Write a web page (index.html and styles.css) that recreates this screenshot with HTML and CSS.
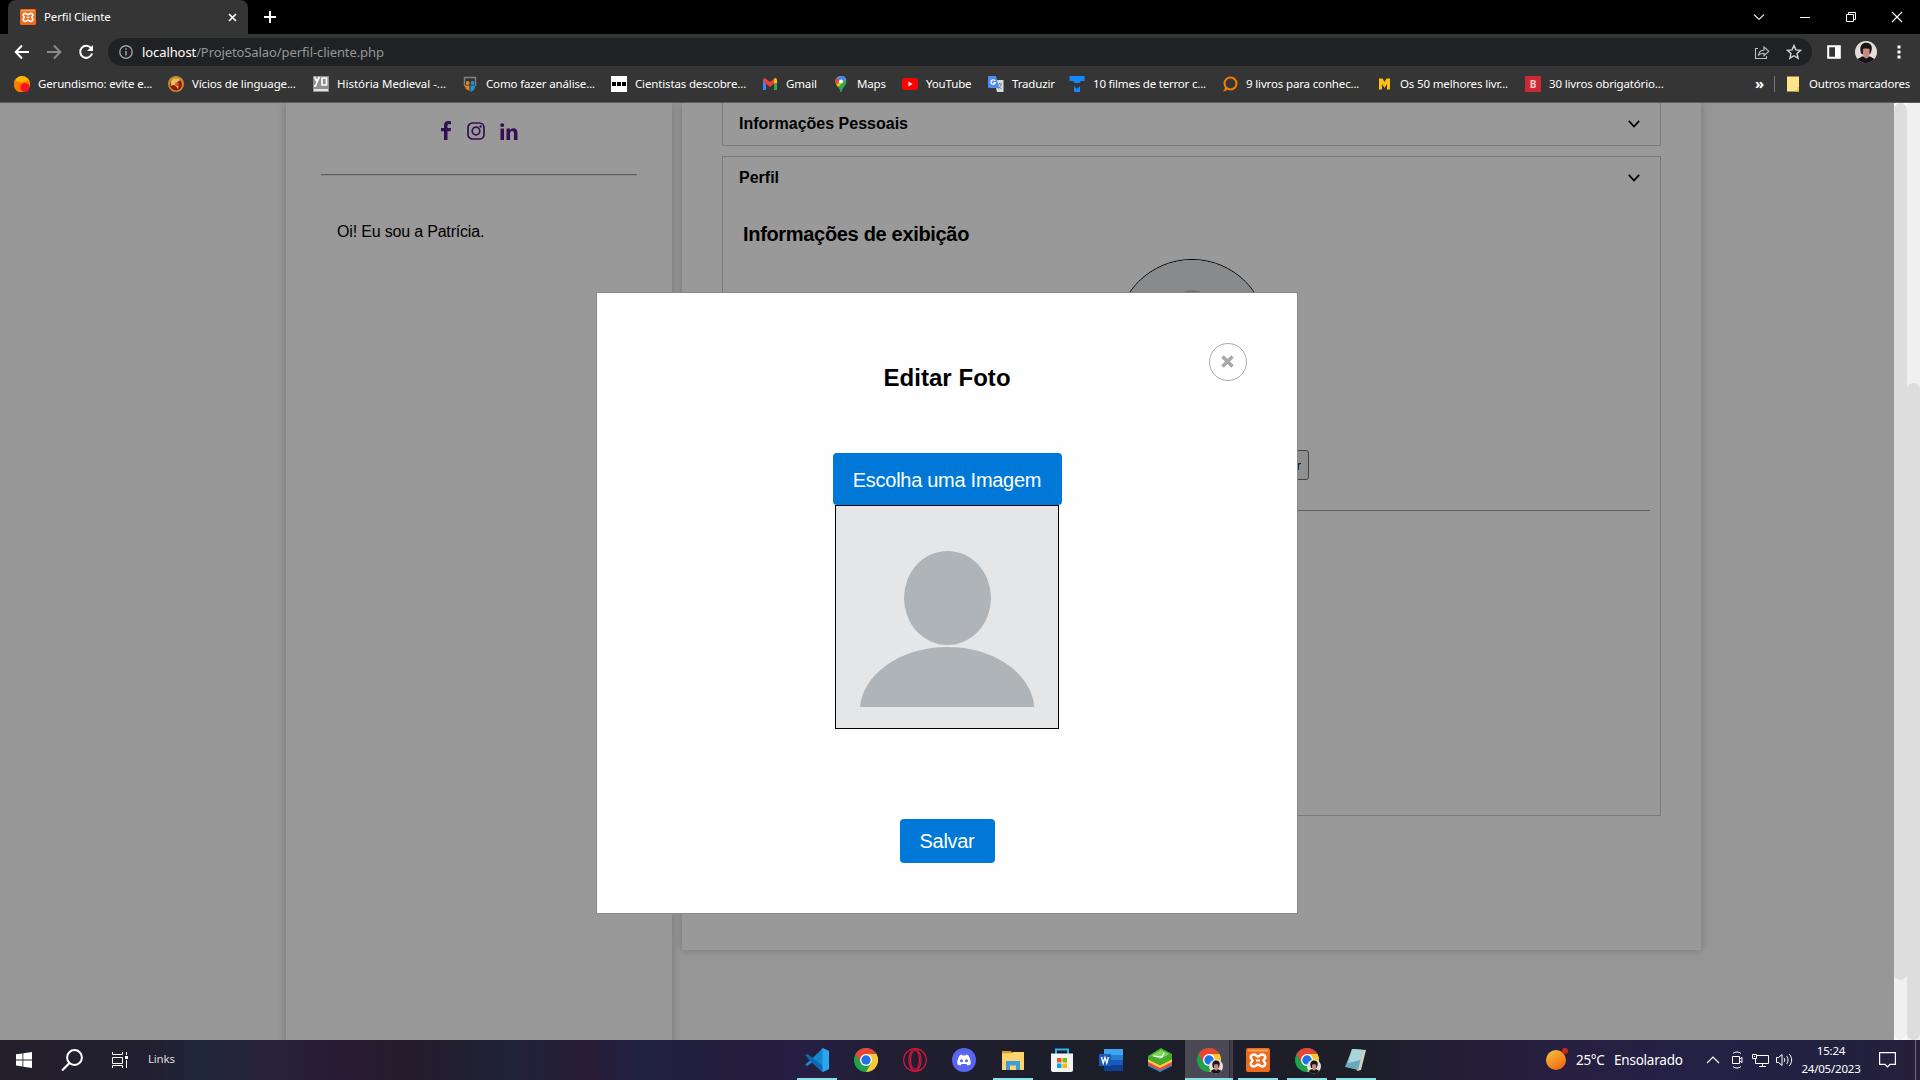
FILE: index.html
```html
<!DOCTYPE html>
<html lang="pt-BR">
<head>
<meta charset="utf-8">
<title>Perfil Cliente</title>
<link rel="stylesheet" href="styles.css">
</head>
<body>
<svg class="defs" aria-hidden="true">
  <symbol id="xampp" viewBox="0 0 24 24">
    <rect width="24" height="24" rx="2" fill="#ec6b1c"/><path d="M2 1.500h20v2H2z" fill="#f6a25c"/>
    <path d="M8 6.500c2.200 0 2.400 2 4 2s1.800-2 4-2 3.300 1.600 3.300 3-1.800 1.900-1.800 3 1.800 1.600 1.800 3-1.100 3-3.300 3-2.400-2-4-2-1.800 2-4 2-3.300-1.600-3.300-3 1.800-1.900 1.800-3-1.800-1.600-1.800-3 1.100-3 3.300-3z" fill="none" stroke="#fff" stroke-width="2.500"/>
    <path d="M10 12.500h4" stroke="#fff" stroke-width="2"/>
  </symbol>
  <symbol id="chrome" viewBox="0 0 24 24">
    <circle cx="12" cy="12" r="12" fill="#1ea34b"/>
    <path d="M12 0a12 12 0 0 1 10.400 6H12L6.800 15 1.600 6A12 12 0 0 1 12 0z" fill="#ea4435"/>
    <path d="M22.400 6A12 12 0 0 1 12 24l5.200-9L12 6z" fill="#fcc934"/>
    <circle cx="12" cy="12" r="6" fill="#fff"/><circle cx="12" cy="12" r="4.700" fill="#1a73e8"/>
  </symbol>
  <symbol id="face" viewBox="0 0 22 22">
    <circle cx="11" cy="11" r="11" fill="#e4ddd8"/>
    <path d="M2.500 18 7 15.500h8l4.500 2.500A11 11 0 0 1 2.500 18z" fill="#17151a"/>
    <path d="M5.500 9.500c-1-5.500 2.500-8 6-7.800 4.500.3 6.300 3.800 5 7.800-.5 3-1.500 3.700-2.500 3.700H7.500c-1.500 0-2-2-2-3.700z" fill="#1c1417"/>
    <path d="M8 7.500h6.500v5c0 2-1.500 5-3.200 5S8 14.500 8 12.500z" fill="#c88b83"/>
    <path d="M7.500 8c2-1.500 5-1.500 7.500 0l-.5-3h-7z" fill="#1c1417"/>
  </symbol>
  <symbol id="chrome-profile" viewBox="0 0 26 26">
    <use href="#chrome" width="24" height="24"/><use href="#face" x="12" y="11" width="14" height="15"/>
  </symbol>
  <symbol id="person" viewBox="0 0 222 222">
    <rect width="222" height="222" fill="#e4e6e8"/>
    <ellipse cx="111.500" cy="92" rx="43.500" ry="47" fill="#aeb4b8"/>
    <path d="M24 201C26.500 170 62 141 111.500 141S196 170 198.300 201z" fill="#aeb4b8"/>
  </symbol>
</svg>

<header class="browser">
  <div class="tabstrip">
    <div class="tab">
      <svg class="i16" viewBox="0 0 24 24"><use href="#xampp"/></svg>
      <span class="tab-title">Perfil Cliente</span>
      <svg class="tab-close" viewBox="0 0 9 9"><path d="M1 1l7 7M8 1 1 8" stroke="#fff" stroke-width="1.700"/></svg>
    </div>
    <svg class="new-tab" viewBox="0 0 12 12"><path d="M6 0v12M0 6h12" stroke="#fff" stroke-width="2"/></svg>
    <div class="window-buttons">
      <svg viewBox="0 0 12 12"><path d="M1 3.500l5 5 5-5" fill="none" stroke="#ddd" stroke-width="1.200"/></svg>
      <svg viewBox="0 0 12 12"><path d="M1 6.500h10" stroke="#fff"/></svg>
      <svg viewBox="0 0 12 12"><path d="M1.500 3.500h7v7h-7zM3.500 3.500v-2h7v7h-2" fill="none" stroke="#fff"/></svg>
      <svg viewBox="0 0 12 12"><path d="M1 1l10 10M11 1 1 11" stroke="#fff" stroke-width="1.200"/></svg>
    </div>
  </div>
  <div class="toolbar">
    <div class="nav">
      <svg viewBox="0 0 16 16"><path d="M15 8H2M8 1.500 1.700 8 8 14.500" fill="none" stroke="#fff" stroke-width="2"/></svg>
      <svg viewBox="0 0 16 16"><path d="M1 8h13M8 1.500 14.300 8 8 14.500" fill="none" stroke="#8a8a8a" stroke-width="2"/></svg>
      <svg viewBox="0 0 16 16"><path d="M13 4.200A6 6 0 1 0 14 9.500" fill="none" stroke="#fff" stroke-width="2"/><path d="M15 1v6H9z" fill="#fff"/></svg>
    </div>
    <div class="omnibox">
      <svg class="info" viewBox="0 0 14 14"><circle cx="7" cy="7" r="6.200" fill="none" stroke="#9aa0a6" stroke-width="1.400"/><path d="M7 6v4.500M7 3.300v1.500" stroke="#9aa0a6" stroke-width="1.500"/></svg>
      <span class="url">localhost<span class="path">/ProjetoSalao/perfil-cliente.php</span></span>
      <svg class="omni-icon" viewBox="0 0 16 16"><path d="M4 4.500H1.500v10h11V12M4.500 11c.5-3 2-4.700 5.500-5V3L14.800 7.300 10 11.700V9.200C7.500 9.200 6 9.700 4.500 11z" fill="none" stroke="#bdc1c6" stroke-width="1.100"/></svg>
      <svg class="omni-icon" viewBox="0 0 16 16"><path d="M8 1.500l1.900 4.400 4.700.4-3.600 3.200 1.100 4.700L8 11.700l-4.100 2.500L5 9.500 1.400 6.300l4.700-.4z" fill="none" stroke="#d0d3d6" stroke-width="1.400"/></svg>
    </div>
    <svg class="panel" viewBox="0 0 14 14"><path d="M1.200 1.200h11.600v11.600H1.200z" fill="none" stroke="#fff" stroke-width="2"/><path d="M8 1h5v12H8z" fill="#fff"/></svg>
    <svg class="profile" viewBox="0 0 22 22"><use href="#face"/></svg>
    <svg class="kebab" viewBox="0 0 4 14"><path d="M.5.500h3v3h-3zM.5 5.500h3v3h-3zM.5 10.500h3v3h-3z" fill="#fff"/></svg>
  </div>
  <nav class="bookmarks">
    <a><svg viewBox="0 0 16 16"><circle cx="8" cy="8" r="8" fill="#ffb800"/><path d="M1 4a8 8 0 0 0 9 12 8 8 0 0 0 4-12c-3 3-9 3-13 0z" fill="#ff7a00"/><circle cx="11" cy="11.500" r="4.500" fill="#ff1028"/></svg><span>Gerundismo: evite e...</span></a>
    <a><svg viewBox="0 0 16 16"><circle cx="8" cy="8" r="8" fill="#c98a2c"/><circle cx="8" cy="8.500" r="6" fill="#8c1c10"/><path d="M3 5c3-4 8-3 10 0-2-1-3 0-4 2 1 1 2 3 1 6C8 9 5 8 3 10z" fill="#edc062"/><circle cx="9" cy="8" r="2" fill="#d35325"/></svg><span>Vícios de linguage...</span></a>
    <a class="wide"><svg viewBox="0 0 16 16"><path d="M0 0h16v16H0z" fill="#8f8f8f"/><path d="M1.500 1l2.500 4.500L6.500 1M6 1 2.500 10H1M9 2h4.500v7H9zM1 14h14" fill="none" stroke="#fff" stroke-width="1.700"/></svg><span>História Medieval -...</span></a>
    <a><svg viewBox="0 0 16 16"><path d="M2.500 10V1.500h11V10" fill="none" stroke="#7b8486" stroke-width="1.400"/><circle cx="5.700" cy="7" r="1.900" fill="#e98215"/><circle cx="10.500" cy="7" r="1.900" fill="#1696d2"/><path d="M2.500 9.500h5V15L4 13z" fill="#e98215"/><path d="M13.500 9.500h-5V16l3.500-2z" fill="#1696d2"/></svg><span>Como fazer análise...</span></a>
    <a><svg viewBox="0 0 16 16"><path d="M0 0h16v16H0z" fill="#fff"/><path d="M1 6h4v4H1zM6 6h4v4H6zM11 6h4v4h-4z" fill="#000"/></svg><span>Cientistas descobre...</span></a>
    <a><svg viewBox="0 0 16 16"><path d="M1 3v11h3V6z" fill="#4285f4"/><path d="M15 3v11h-3V6z" fill="#34a853"/><path d="M1 3l2-1 5 4 5-4 2 1-1 3-6 5-6-5z" fill="#ea4335"/><path d="M12 3l2-1 1 2v3h-3z" fill="#fbbc04"/></svg><span>Gmail</span></a>
    <a><svg viewBox="0 0 16 16"><path d="M8 0a5.500 5.500 0 0 1 5.500 5.500C13.500 9 9.500 11 8.500 16h-1C6.500 11 2.500 9 2.500 5.500A5.500 5.500 0 0 1 8 0z" fill="#34a853"/><path d="M8 0a5.500 5.500 0 0 1 5 3L5 11C3.500 9 2.500 7 2.500 5.500A5.500 5.500 0 0 1 8 0z" fill="#fbbc04"/><path d="M8 0a5.500 5.500 0 0 1 5 3L8 8 3.500 2.500A5.500 5.500 0 0 1 8 0z" fill="#4285f4"/><path d="M3.700 2 7 5 4 8.500C2 6 2.300 4 3.700 2z" fill="#ea4335"/><circle cx="8" cy="5.500" r="2" fill="#fff"/></svg><span>Maps</span></a>
    <a><svg viewBox="0 0 16 16"><rect y="2" width="16" height="12" rx="3" fill="#f00"/><path d="M6.500 5.500v5l4-2.500z" fill="#fff"/></svg><span>YouTube</span></a>
    <a><svg viewBox="0 0 16 16"><path d="M6 4h9.500v12H9z" fill="#d6dade"/><path d="M9 8h5M11.500 7v1M13 8c0 2-1 4-3 5M10.500 9.500c.5 2 2 3 3 3.500" stroke="#7c8a92" fill="none"/><path d="M0 0h8l3 12H1a1 1 0 0 1-1-1z" fill="#4d8bf5"/><path d="M7.300 5A2.300 2.300 0 1 0 7.500 6.700H5.200" stroke="#fff" fill="none" stroke-width="1.200"/></svg><span>Traduzir</span></a>
    <a class="tight"><svg viewBox="0 0 16 16"><path d="M.5 0h15v5H12L10 7H6L4 5H.5zM5 10l3 3 3-3v6H5z" fill="#1688ff"/></svg><span>10 filmes de terror c...</span></a>
    <a><svg viewBox="0 0 16 16"><circle cx="8.500" cy="7.500" r="6" fill="none" stroke="#f57c00" stroke-width="2"/><path d="M1 15.500c2 0 4-1 5-3l-3-2c0 2-.5 3.500-2 5z" fill="#f57c00"/></svg><span>9 livros para conhec...</span></a>
    <a><svg viewBox="0 0 16 16"><path d="M3 2.500h3.500L8.500 6l2-3.500H14v11h-3V8l-2.500 4L6 8v5.500H3z" fill="#ffc010"/></svg><span>Os 50 melhores livr...</span></a>
    <a><b class="b-icon">B</b><span>30 livros obrigatório...</span></a>
    <b class="more">»</b>
    <a class="others"><svg viewBox="0 0 14 16"><path d="M1 .5h12v15H1z" fill="#ffe48b"/><path d="M13 11v4.500H9V14h2.500v-3z" fill="#f3c843"/></svg><span>Outros marcadores</span></a>
  </nav>
</header>

<main class="viewport">
  <aside class="sidebar">
    <div class="social">
      <svg width="12" height="19" viewBox="0 0 12 19"><path d="M11 .3v3H8.700c-1 0-1.200.5-1.200 1.400v2.200H11l-.4 3.300H7.500V19H4v-8.800H1V6.900h3V4.400C4 1.500 5.600.1 8.200.1z" fill="#551a8b"/></svg>
      <svg width="18" height="18" viewBox="0 0 18 18"><rect x="1" y="1" width="16" height="16" rx="4.500" fill="none" stroke="#551a8b" stroke-width="1.700"/><circle cx="9" cy="9" r="3.800" fill="none" stroke="#551a8b" stroke-width="1.700"/><circle cx="13.600" cy="4.500" r="1.200" fill="#551a8b"/></svg>
      <svg width="18" height="17" viewBox="0 0 18 17"><path d="M.5 5.500H4V17H.5zM2.200.2a2 1.800 0 1 1 0 3.700 2 1.800 0 0 1 0-3.700zM6.500 5.500H10v1.600c.7-1.100 1.800-1.900 3.500-1.900 2.700 0 4 1.800 4 4.800v7H14v-6.400c0-1.500-.5-2.500-1.900-2.500S10 9.200 10 10.500V17H6.500z" fill="#551a8b"/></svg>
    </div>
    <hr>
    <p>Oi! Eu sou a Patrícia.</p>
  </aside>
  <section class="content">
    <div class="panel-box first"><h3>Informações Pessoais</h3><svg class="chev" viewBox="0 0 12 8"><path d="M.8.800 6 6.500 11.200.8" fill="none" stroke="#000" stroke-width="1.800"/></svg></div>
    <div class="panel-box second">
      <div class="panel-head"><h3>Perfil</h3><svg class="chev" viewBox="0 0 12 8"><path d="M.8.800 6 6.500 11.200.8" fill="none" stroke="#000" stroke-width="1.800"/></svg></div>
      <h2>Informações de exibição</h2>
      <svg class="round" viewBox="0 0 222 222"><use href="#person"/></svg>
      <button class="edit" type="button">Editar</button>
      <hr>
    </div>
  </section>
  <div class="overlay">
    <div class="modal">
      <div class="close"><svg viewBox="0 0 13 13"><path d="M1.500 1.500l10 10M11.500 1.500l-10 10" stroke="#aaa" stroke-width="3.600"/></svg></div>
      <h1>Editar Foto</h1>
      <div class="choose">Escolha uma Imagem</div>
      <svg class="photo" viewBox="0 0 222 222"><use href="#person"/></svg>
      <div class="save">Salvar</div>
    </div>
  </div>
  <div class="scroll inner"><i></i></div>
  <div class="scroll outer"><i></i></div>
</main>

<footer class="taskbar">
  <div class="start">
    <svg width="16" height="16" viewBox="0 0 16 16"><path d="M0 2.300 6.500 1.400v6.100H0zM7.300 1.300 16 0v7.500H7.300zM0 8.400h6.500v6.100L0 13.600zM7.300 8.400H16V16l-8.700-1.300z" fill="#fff"/></svg>
    <svg width="22" height="22" viewBox="0 0 22 22"><circle cx="13.500" cy="8.500" r="7.400" fill="none" stroke="#fff" stroke-width="2"/><path d="M8.500 14 1 21.500" stroke="#fff" stroke-width="2.200"/></svg>
    <svg width="17" height="16" viewBox="0 0 17 16"><path d="M.5 0v2.500h10V0M.5 5.500h10v6H.500zM.5 16v-2.500h10V16M14.500 0v3M14.500 8v8" fill="none" stroke="#fff"/><path d="M13 4h3v3h-3z" fill="#fff"/></svg>
    <span>Links</span>
  </div>
  <div class="apps">
    <div class="app on"><svg viewBox="0 0 24 24"><path d="M17.500 0 24 3v18l-6.500 3L7 14.500 2.500 18 0 16.700 14 4z" fill="#1687cf"/><path d="M0 7.300 2.500 6 18 18v6L7 14.500z" fill="#0b6bb0"/><path d="M17.500 0 24 3v18l-6.500 3z" fill="#2ba6ee"/></svg></div>
    <div class="app"><svg viewBox="0 0 24 24"><use href="#chrome"/></svg></div>
    <div class="app"><svg viewBox="0 0 24 24"><g fill="none" stroke="#d9153e" stroke-width="1.200"><circle cx="12" cy="12" r="11.300"/><ellipse cx="12" cy="12" rx="6" ry="11"/><ellipse cx="12" cy="12" rx="4.500" ry="9.500"/></g></svg></div>
    <div class="app"><svg viewBox="0 0 24 24"><circle cx="12" cy="12" r="12" fill="#5865f2"/><path d="M8 7l2-.5.5 1h3l.5-1 2 .5c2 2.500 3 5.500 2.700 9-1 1-2.200 1.300-3.200 1.500l-1-1.500h-5l-1 1.500c-1-.2-2.200-.5-3.200-1.500C5 12.500 6 9.500 8 7z" fill="#fff"/><circle cx="9.500" cy="12.700" r="1.500" fill="#5865f2"/><circle cx="14.500" cy="12.700" r="1.500" fill="#5865f2"/></svg></div>
    <div class="app on"><svg viewBox="0 0 24 24"><path d="M1 3h9l2 3h-11z" fill="#dc9c1f"/><path d="M1 5.500 11 5l1-1h11v18H1z" fill="#fbd56b"/><path d="M5 13h14v9h-4v-4.500H9V22H5z" fill="#3d9be0"/></svg></div>
    <div class="app"><svg viewBox="0 0 24 24"><path d="M6 8V1.500h12V8" fill="none" stroke="#2fb5ea" stroke-width="2"/><path d="M1 5.500h22V22a2 2 0 0 1-2 2H3a2 2 0 0 1-2-2z" fill="#f2f2f2"/><path d="M7 10h4.500v4.500H7z" fill="#f25022"/><path d="M12.500 10H17v4.500h-4.500z" fill="#7fba00"/><path d="M7 15.500h4.500V20H7z" fill="#00a4ef"/><path d="M12.500 15.500H17V20h-4.500z" fill="#ffb900"/></svg></div>
    <div class="app"><svg viewBox="0 0 24 24"><path d="M5 1h19v6H5z" fill="#41a5ee"/><path d="M5 7h19v5H5z" fill="#2b7cd3"/><path d="M5 12h19v5H5z" fill="#185abd"/><path d="M5 17h19v6H5z" fill="#103f91"/><path d="M0 6h12v12H0z" fill="#185abd"/><path d="M2.500 9l1.700 6L6 9.500 7.800 15l1.700-6" fill="none" stroke="#fff" stroke-width="1.400"/></svg></div>
    <div class="app"><svg viewBox="0 0 24 24"><path d="M0 16l12 6 12-6v2l-12 6-12-6z" fill="#2490df"/><path d="M0 13.500l12 6 12-6v3l-12 6-12-6z" fill="#f0443c"/><path d="M0 11l12 6 12-6v3l-12 6-12-6z" fill="#ffca3a"/><path d="M0 8 13 0l11 6v5l-12 6L0 11z" fill="#43ad2f"/><path d="M3 7.500 13 2l8 4-9 5z" fill="#83d65d"/><path d="M5 8l9 1 2-4" fill="none" stroke="#fff" stroke-width="1.200"/></svg></div>
    <div class="app on active"><svg class="prof" viewBox="0 0 26 26"><use href="#chrome-profile"/></svg></div>
    <div class="app on"><svg viewBox="0 0 24 24"><use href="#xampp"/></svg></div>
    <div class="app on"><svg class="prof" viewBox="0 0 26 26"><use href="#chrome-profile"/></svg></div>
    <div class="app on"><svg viewBox="0 0 24 24"><path d="M8 1l14 1-5 20-4 1z" fill="#d5d0bd"/><path d="M8 1l11 1-5 20-13-3z" fill="#6aa9bb"/><path d="M8 1l11 1-2.500 10L4 15z" fill="#a8d4dc"/></svg></div>
  </div>
  <div class="tray">
    <svg class="sun" viewBox="0 0 22 22"><defs><linearGradient id="g" x1="0" y1="0" x2=".7" y2="1"><stop stop-color="#f6c340"/><stop offset="1" stop-color="#f26a10"/></linearGradient></defs><circle cx="10" cy="12" r="10" fill="url(#g)"/><circle cx="19" cy="3" r="3" fill="#c5281c"/></svg>
    <span class="temp">25°C</span><span class="cond">Ensolarado</span>
    <svg class="caret" viewBox="0 0 14 8"><path d="M1 7l6-6 6 6" fill="none" stroke="#fff" stroke-width="1.200"/></svg>
    <svg class="cam" viewBox="0 0 12 18"><path d="M1.500 5.500h7v7h-7zM8.500 8l2.500-1.500v5L8.500 10M2 2.500c2-2 6-2 8 0M2 15.500c2 2 6 2 8 0" fill="none" stroke="#fff"/></svg>
    <svg class="net" viewBox="0 0 17 15"><path d="M5 2.500h11.500v8H3.500V6M7 13.500h7M10.500 10.500v3M.5 1.500h4v4h-4zM2 3.500h1" fill="none" stroke="#fff"/></svg>
    <svg class="vol" viewBox="0 0 17 14"><path d="M.5 4.500h2l3.500-3v11l-3.500-3h-2zM8 5c1 1 1 3 0 4M10.500 3c2 2 2 6 0 8M13 1c3.500 3.500 3.500 8.500 0 12" fill="none" stroke="#fff"/></svg>
    <div class="clock"><span>15:24</span><span>24/05/2023</span></div>
    <svg class="note" viewBox="0 0 17 16"><path d="M.6.600h15.800v11.800h-5.400l-2.500 2.600L6 12.400H.6z" fill="none" stroke="#fff" stroke-width="1.200"/></svg>
    <i class="desktop"></i>
  </div>
</footer>
</body>
</html>
```
FILE: styles.css
```css
* { box-sizing: border-box; }
body { margin: 0; width: 1920px; height: 1080px; overflow: hidden; font-family: "Liberation Sans", Arial, sans-serif; color: #000; display: flex; flex-direction: column; }
svg { display: block; flex: none; }
h1, h2, h3, p, hr { margin: 0; }
.defs { position: absolute; width: 0; height: 0; }

.browser { height: 103px; background: #353535; border-bottom: 1px solid #5c5a5a; font-family: "Noto Sans", sans-serif; color: #fff; white-space: nowrap; }
.tabstrip { height: 34px; background: #000; display: flex; align-items: center; }
.tab { width: 240px; height: 34px; margin-left: 8px; padding: 0 12px; background: #353535; border-radius: 8px 8px 0 0; display: flex; align-items: center; gap: 8px; }
.i16 { width: 16px; height: 16px; }
.tab-title { font-size: 11.500px; letter-spacing: -.14px; line-height: 16px; flex: 1; padding-bottom: 1px; }
.tab-close { width: 9px; height: 9px; margin-right: -1px; }
.new-tab { width: 12px; height: 12px; margin-left: 16px; }
.window-buttons { margin-left: auto; display: flex; gap: 34px; padding-right: 17px; height: 28px; align-items: center; }
.window-buttons svg { width: 12px; height: 12px; }

.toolbar { height: 36px; display: flex; align-items: center; }
.nav { display: flex; gap: 16px; padding-left: 14px; width: 108px; }
.nav svg { width: 16px; height: 16px; }
.omnibox { width: 1704px; height: 28px; background: #202124; border-radius: 14px; display: flex; align-items: center; padding: 0 10px 0 11px; }
.info { width: 14px; height: 14px; }
.url { margin-left: 9px; flex: 1; font-size: 13px; letter-spacing: -.09px; }
.path { color: #94979b; }
.omni-icon { width: 16px; height: 16px; margin-left: 16px; }
.panel { width: 14px; height: 14px; margin-left: 15px; }
.profile { width: 22px; height: 22px; margin-left: 14px; }
.kebab { width: 4px; height: 14px; margin-left: 20px; }

.bookmarks { height: 28px; padding-left: 14px; display: grid; align-items: center; grid-template-columns: 154px 145px 149px 149px 151px 71px 69px 86px 81px 153px 154px 149px 230px 19px 1fr; font-size: 11.500px; letter-spacing: -.15px; }
.bookmarks a { display: flex; align-items: center; gap: 8px; }
.bookmarks a svg { width: 16px; height: 16px; }
.bookmarks span { line-height: 16px; padding-bottom: 1px; }
.wide { letter-spacing: -.03px; }
.tight { letter-spacing: -.2px; }
.b-icon { width: 16px; height: 16px; background: #c92a35; color: #f3c9cb; font-size: 10px; line-height: 16px; text-align: center; letter-spacing: 0; }
.more { font-size: 15px; line-height: 18px; padding-bottom: 3px; }
.bookmarks .others { height: 16px; border-left: 1px solid #777; padding-left: 11px; gap: 9px; letter-spacing: -.2px; }
.bookmarks .others svg { width: 14px; }

.viewport { position: relative; height: 937px; background: #fafafa; display: flex; align-items: flex-start; padding-left: 286px; gap: 10px; overflow: hidden; }
.sidebar { width: 386px; height: 950px; background: #fff; box-shadow: 0 0 8px rgba(0, 0, 0, .22); padding: 19px 35px; }
.social { display: flex; justify-content: center; align-items: flex-end; gap: 15px; height: 18px; padding-right: 1px; }
.sidebar hr { margin-top: 34px; height: 2px; border: 0; border-top: 1px solid #999; border-bottom: 1px solid #e8e8e8; }
.sidebar p { margin: 47px 0 0 16px; font-size: 16px; line-height: 18px; letter-spacing: -.18px; }
.content { width: 1019px; height: 847px; background: #fff; box-shadow: 0 0 8px rgba(0, 0, 0, .22); padding: 0 40px; }
.panel-box { width: 939px; border: 1px solid #cbcbcb; }
.first { height: 43px; border-top: 0; padding: 11px 20px 0 16px; display: flex; justify-content: space-between; }
h3 { font-size: 16px; line-height: 20px; }
.chev { width: 12px; height: 8px; margin-top: 6px; }
.second { margin-top: 10px; height: 660px; padding: 11px 10px 0; display: flex; flex-direction: column; align-items: center; }
.panel-head { align-self: stretch; padding: 0 10px 0 6px; display: flex; justify-content: space-between; }
.second h2 { align-self: flex-start; margin: 34px 0 0 10px; font-size: 20px; line-height: 24px; letter-spacing: -.32px; }
.round { width: 152px; height: 152px; margin-top: 13px; border: 1px solid #000; border-radius: 50%; overflow: hidden; }
.edit { align-self: flex-end; margin: 39px 341px 0 0; width: 56px; height: 30px; border: 1px solid #707070; border-radius: 3px; background: #efefef; font: 13.330px "Liberation Sans", Arial, sans-serif; color: #000; padding: 0 7px; text-align: right; }
.second hr { width: 917px; margin-top: 30px; border: 0; border-top: 1px solid #a0a0a0; }

.overlay { position: absolute; inset: 0 26px 0 0; background: rgba(0, 0, 0, .4); padding: 189px 0 0 596px; }
.modal { position: relative; width: 702px; height: 622px; background: #fefefe; border: 1px solid #888; display: flex; flex-direction: column; align-items: center; }
.close { position: absolute; right: 50px; top: 50px; width: 38px; height: 38px; border: 1px solid #aaa; border-radius: 50%; padding: 11px; }
.close svg { width: 13px; height: 13px; }
h1 { font-size: 24px; line-height: 28px; margin-top: 71px; letter-spacing: .05px; }
.choose { width: 229px; height: 52px; margin-top: 61px; border-radius: 4px; background: #0078d7; color: #fff; font-size: 20px; line-height: 54px; text-align: center; letter-spacing: -.28px; }
.photo { width: 224px; height: 224px; border: 1px solid #000; }
.save { margin-top: 90px; width: 95px; height: 44px; border-radius: 4px; background: #0078d7; color: #fff; font-size: 20px; line-height: 44px; text-align: center; letter-spacing: -.3px; }

.scroll { position: absolute; top: 0; width: 13px; height: 937px; background: #f0f0f0; }
.scroll i { display: block; background: #ddd; border-radius: 7px; }
.inner { right: 13px; border-radius: 7px; }
.inner i { height: 877px; }
.outer { right: 0; padding-top: 280px; }
.outer i { height: 657px; }

.taskbar { height: 40px; display: flex; color: #fff; font-family: "Noto Sans", sans-serif; white-space: nowrap; background: linear-gradient(90deg, #231f2c 0, #221f30 150px, #1f273a 205px, #29203a 280px, #271b32 350px, #231c2b 420px, #20233a 510px, #2a1d38 590px, #202242 640px, #251d3c 740px, #261f44 800px, #201e30 900px, #1c1e2a 1080px, #1d1e28 1350px, #231e35 1450px, #271f40 1560px, #242145 1700px, #21213f 1850px, #271f3c 1920px); }
.start { width: 793px; display: flex; align-items: center; padding-left: 16px; font-size: 11.500px; }
.start svg:nth-child(2) { margin-left: 29px; }
.start svg:nth-child(3) { margin-left: 29px; }
.start span { margin-left: 19px; color: #ddd; letter-spacing: -.2px; line-height: 16px; padding-bottom: 2px; }
.apps { width: 590px; display: flex; gap: 1px; }
.app { width: 48px; height: 40px; padding: 8px 12px 0; }
.app svg { width: 24px; height: 24px; }
.app .prof { width: 26px; height: 26px; }
.on { background: linear-gradient(#8ae2e8, #8ae2e8) 50% 100% / 40px 2px no-repeat; }
.active { background: linear-gradient(#8ae2e8, #8ae2e8) 50% 100% / 48px 2px no-repeat, linear-gradient(90deg, #4b4a54 44px, #2c2a34 44px, #403e49 46px); }
.tray { flex: 1; display: flex; align-items: center; padding-left: 163px; }
.sun { width: 22px; height: 22px; margin-bottom: 2px; }
.temp { font-size: 13.500px; width: 38px; margin-left: 8px; letter-spacing: -.3px; }
.cond { font-size: 13.500px; width: 92px; letter-spacing: -.22px; }
.caret { width: 14px; height: 8px; }
.cam { width: 12px; height: 18px; margin-left: 11px; }
.net { width: 17px; height: 15px; margin-left: 9px; }
.vol { width: 17px; height: 14px; margin-left: 7px; }
.clock { width: 62px; margin-left: 7px; font-size: 11.500px; line-height: 18px; letter-spacing: -.2px; display: flex; flex-direction: column; align-items: center; }
.note { width: 17px; height: 16px; margin-left: 17px; }
.desktop { width: 1px; height: 40px; margin-left: 19px; background: #6b6880; }
```
